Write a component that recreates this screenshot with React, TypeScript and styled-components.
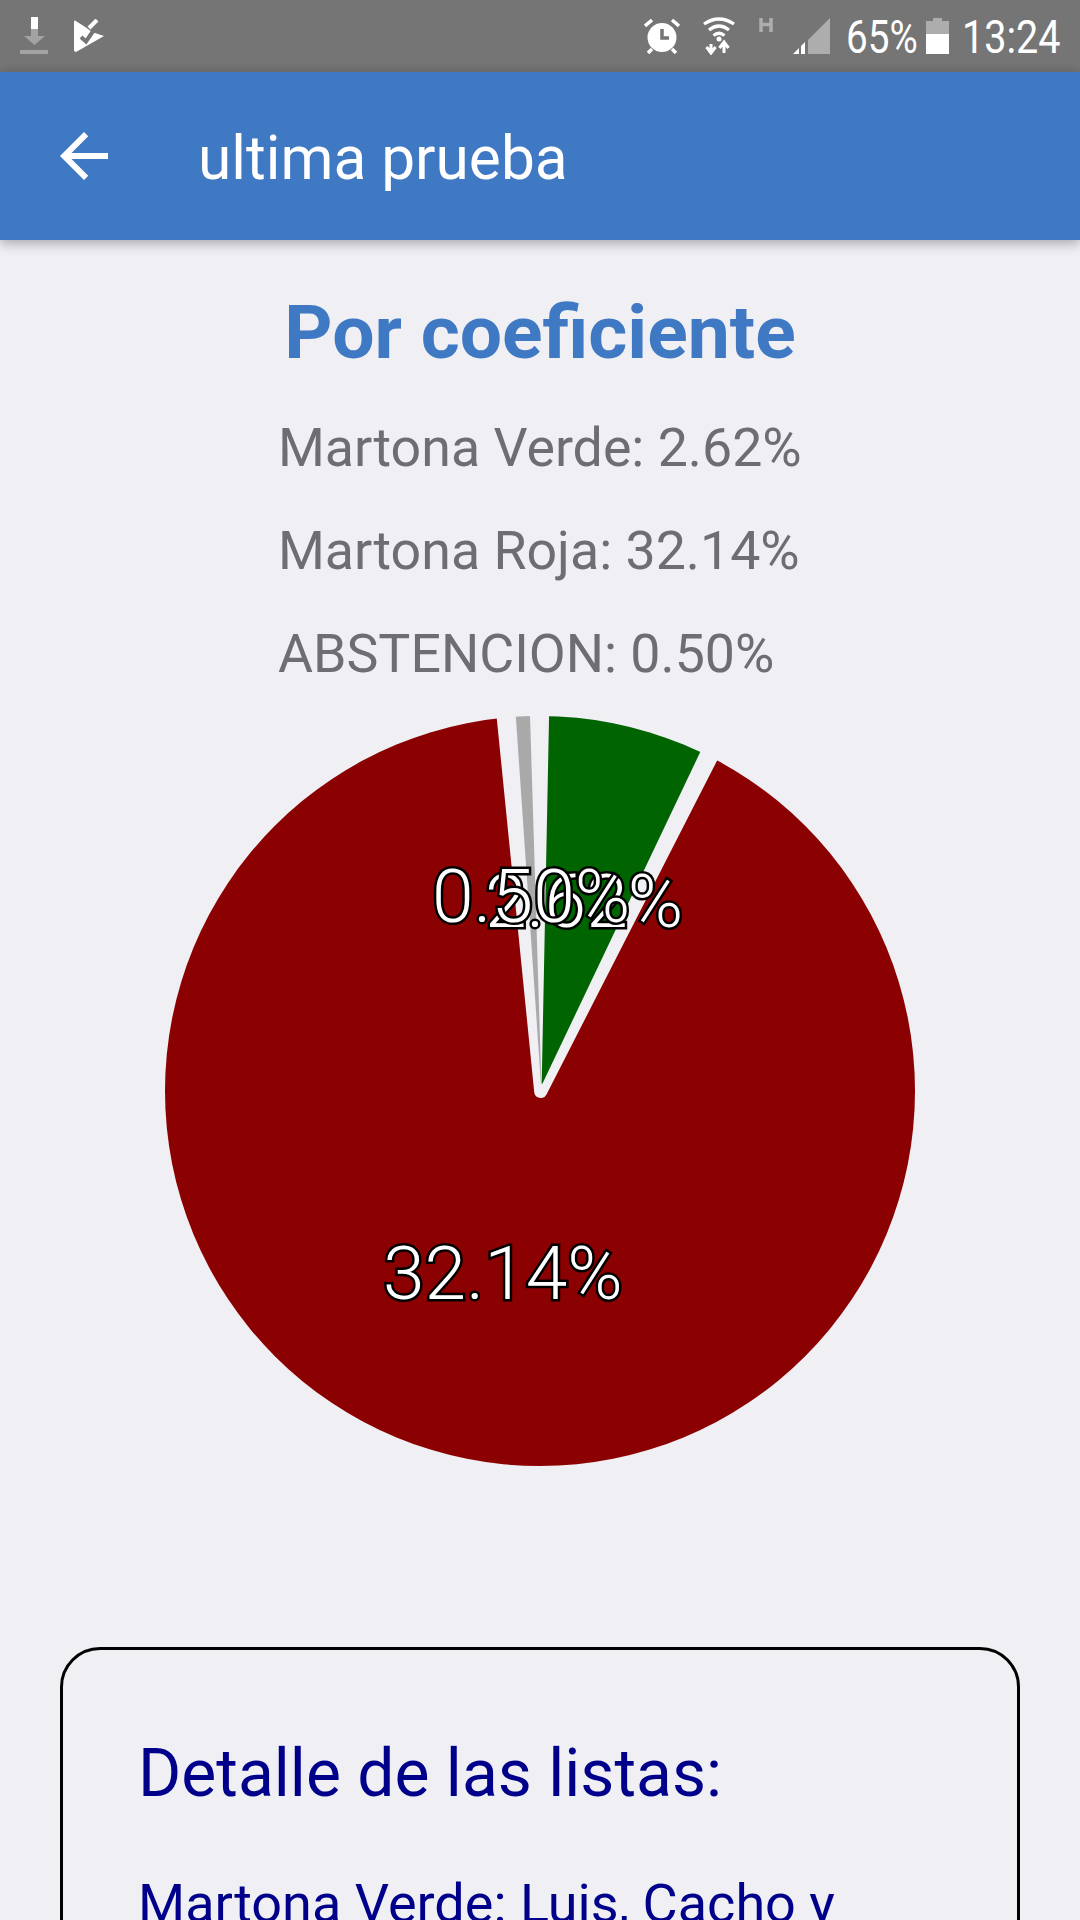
import React from 'react';
import styled, { createGlobalStyle } from 'styled-components';

const Global = createGlobalStyle`
  html, body { margin: 0; padding: 0; width: 1080px; height: 1920px; overflow: hidden; background: #efeff4; }
  #root { width: 1080px; height: 1920px; overflow: hidden; }
`;

const Screen = styled.div`
  width: 1080px;
  height: 1920px;
  overflow: hidden;
  background: #efeff4;
  font-family: Roboto, "Liberation Sans", sans-serif;
`;

const StatusBar = styled.div`
  height: 72px;
  background: #757575;
  display: flex;
  align-items: center;
  justify-content: space-between;
  padding: 0 20px;
  box-sizing: border-box;
`;

const StatusGroup = styled.div`
  display: flex;
  align-items: center;
`;

const StatusText = styled.span<{ $w: number; $sx: number }>`
  display: inline-block;
  width: ${p => p.$w}px;
  color: #fff;
  font-size: 46px;
  line-height: 72px;
  margin-top: 2px;
  white-space: nowrap;
  transform: scaleX(${p => p.$sx});
  transform-origin: left center;
`;

const StatusIcon = styled.svg`
  display: block;
  flex: none;
`;

const Header = styled.header`
  position: relative;
  height: 168px;
  background: #3f78c3;
  display: flex;
  align-items: center;
  padding-left: 48px;
  box-shadow: 0 3px 12px rgba(0, 0, 0, 0.32);
`;

const BackIcon = styled.svg`
  width: 72px;
  height: 72px;
  fill: #fff;
  flex: none;
`;

const HeaderTitle = styled.h1`
  margin: 5px 0 0 78px;
  font-size: 60.4px;
  font-weight: 400;
  color: #fff;
`;

const Main = styled.main`
  display: flex;
  flex-direction: column;
  align-items: center;
`;

const Title = styled.h2`
  margin: 50px 0 0;
  font-size: 75px;
  line-height: 84px;
  font-weight: 700;
  color: #3f78c3;
`;

const Results = styled.div`
  align-self: center;
  width: 524px;
  margin-top: 42px;
`;

const Result = styled.div`
  font-size: 53.7px;
  line-height: 63px;
  margin-bottom: 40px;
  color: #6d6d72;
  white-space: nowrap;
`;

const PieSvg = styled.svg`
  display: block;
  width: 750px;
  height: 750px;
  margin-top: -9px;
  overflow: visible;
`;

const SliceLabel = styled.text`
  font-family: Roboto, sans-serif;
  font-size: 75px;
  font-weight: 300;
  fill: #fff;
  stroke: #000;
  stroke-width: 5px;
  paint-order: stroke;
`;

const Card = styled.section`
  align-self: flex-start;
  box-sizing: border-box;
  width: 960px;
  margin: 181px 0 0 60px;
  padding: 85px 75px 0;
  height: 500px;
  border: 3px solid #000;
  border-radius: 40px;
  color: #00008b;
`;

const CardTitle = styled.h3`
  margin: 0;
  font-size: 66px;
  line-height: 78px;
  font-weight: 400;
`;

const CardText = styled.p`
  margin: 59px 0 0;
  font-size: 54px;
  line-height: 64px;
`;

const Pie = () => (
  <PieSvg viewBox="165 716.5 750 750">
    <defs>
      <clipPath id="disc">
        <circle cx="540" cy="1091.5" r="375" />
      </clipPath>
    </defs>
    <circle cx="540" cy="1091.5" r="375" fill="#8b0000" />
    <polygon
      points="540.7,1092 500,686 740,702"
      fill="#efeff4"
      stroke="#efeff4"
      strokeWidth="13"
      strokeLinejoin="round"
    />
    <g clipPath="url(#disc)">
      <polygon points="514,690 529.2,690 541.4,1085 541,1085" fill="#a9a9a9" />
      <polygon points="549.6,690 730,690 542.5,1084 541.7,1084" fill="#006400" />
    </g>
    <SliceLabel x="485" y="927">2.62%</SliceLabel>
    <SliceLabel x="383" y="1299">32.14%</SliceLabel>
    <SliceLabel x="432" y="922">0.50%</SliceLabel>
  </PieSvg>
);

export default function App() {
  return (
    <Screen>
      <Global />
      <StatusBar>
        <StatusGroup>
          <StatusIcon width="28" height="38" viewBox="0 0 28 38">
            <rect x="11" y="0" width="7" height="12" fill="#fff" />
            <path d="M11 12h7v7h7L14.500 28 4 19h7z" fill="#a3a3a3" />
            <rect x="0" y="33" width="28" height="4" fill="#a3a3a3" />
          </StatusIcon>
          <StatusIcon width="32" height="34" viewBox="0 0 32 34" style={{ marginLeft: 26 }}>
            <path d="M1 1.500 L12 8.500 L18 13 L30 17 L2 33 Q0 33 0 31 V3 Q0 1 1 1.500Z" fill="#fff" />
            <path d="M7 18 L12 22.500 L24 5" fill="none" stroke="#757575" strokeWidth="4" />
            <path d="M15 9 L23 1" stroke="#fff" strokeWidth="4" fill="none" />
          </StatusIcon>
        </StatusGroup>
        <StatusGroup>
          <StatusIcon width="36" height="36" viewBox="0 0 36 36">
            <circle cx="18" cy="19.500" r="14.500" fill="#fff" />
            <path d="M18 11v9h7" fill="none" stroke="#757575" strokeWidth="3.500" />
            <path d="M1 8 L8 2 M35 8 L28 2 M4 35 L8 31 M32 35 L28 31" stroke="#fff" strokeWidth="3.500" />
          </StatusIcon>
          <StatusIcon width="32" height="38" viewBox="0 0 32 38" style={{ marginLeft: 23 }}>
            <path d="M1 7 Q16 -3 31 7 M6 13 Q16 5 26 13 M10.500 18.500 Q16 14 21.500 18.500" fill="none" stroke="#fff" strokeWidth="3.200" />
            <circle cx="16" cy="22" r="2.500" fill="#fff" />
            <path d="M8 36 V27 M3.500 30 L8 36 L12.500 30 M21 36 V27 M16.500 31 L21 25 L25.500 31" fill="none" stroke="#fff" strokeWidth="3" />
          </StatusIcon>
          <StatusIcon width="14" height="14" viewBox="0 0 14 14" style={{ marginLeft: 24, alignSelf: 'flex-start', marginTop: 19 }}>
            <path d="M2 0v14M12 0v14M2 6.500h10" fill="none" stroke="#adadad" strokeWidth="3.500" />
          </StatusIcon>
          <StatusIcon width="37" height="36" viewBox="0 0 37 36" style={{ marginLeft: 20 }}>
            <path d="M37 0V36H15V22Z" fill="#adadad" />
            <path d="M0 36L6 30V36Z M8 36V28L12 24V36Z" fill="#fff" />
          </StatusIcon>
          <StatusText $w={80} $sx={0.84} style={{ marginLeft: 16 }}>65%</StatusText>
          <StatusIcon width="23" height="36" viewBox="0 0 23 36">
            <path d="M7 0h9v3h7v13H0V3h7z" fill="#adadad" />
            <rect y="16" width="23" height="20" fill="#fff" />
          </StatusIcon>
          <StatusText $w={98} $sx={0.86} style={{ marginLeft: 13 }}>13:24</StatusText>
        </StatusGroup>
      </StatusBar>
      <Header>
        <BackIcon viewBox="0 0 24 24">
          <path d="M20 11H7.830l5.590-5.590L12 4l-8 8 8 8 1.410-1.410L7.830 13H20v-2z" />
        </BackIcon>
        <HeaderTitle>ultima prueba</HeaderTitle>
      </Header>
      <Main>
        <Title>Por coeficiente</Title>
        <Results>
          <Result>Martona Verde: 2.62%</Result>
          <Result>Martona Roja: 32.14%</Result>
          <Result>ABSTENCION: 0.50%</Result>
        </Results>
        <Pie />
        <Card>
          <CardTitle>Detalle de las listas:</CardTitle>
          <CardText>Martona Verde: Luis, Cacho y</CardText>
        </Card>
      </Main>
    </Screen>
  );
}
